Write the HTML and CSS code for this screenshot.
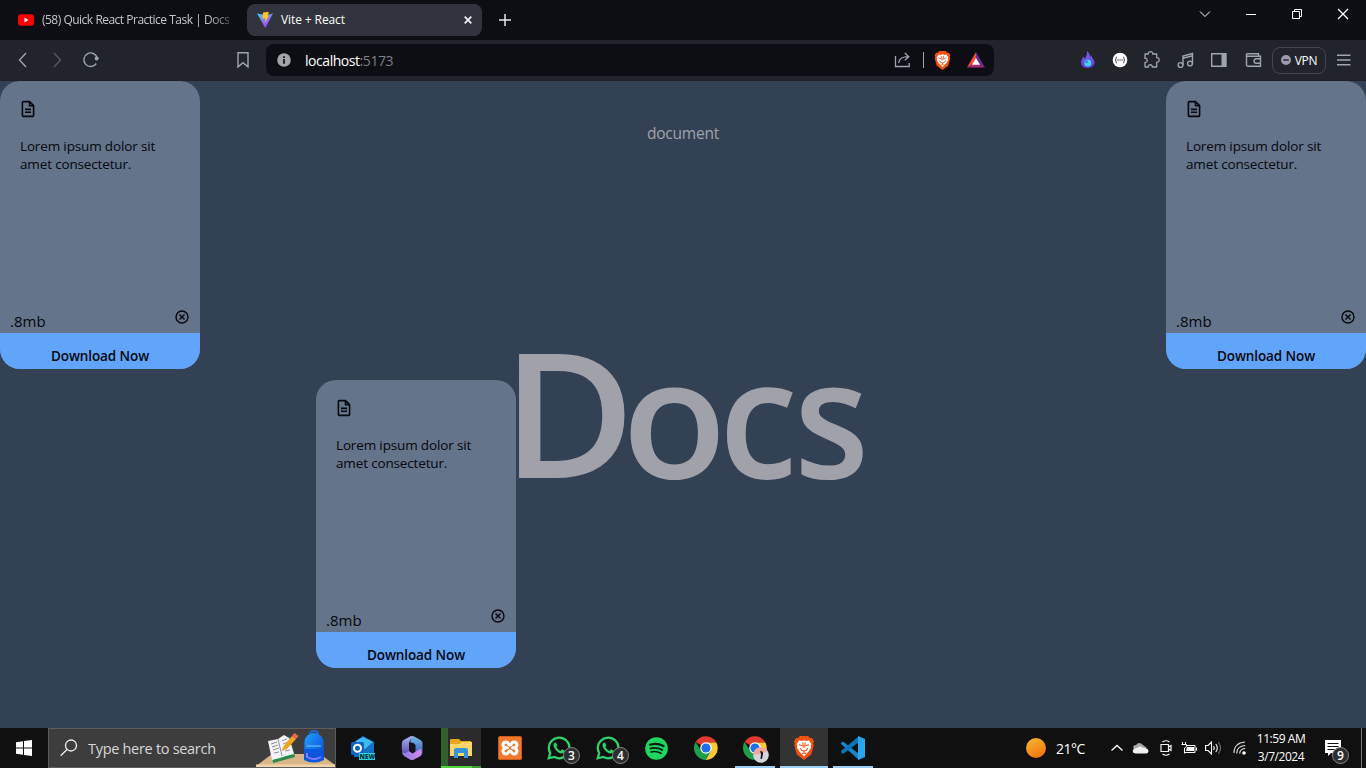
FILE: index.html
```html
<!DOCTYPE html>
<html lang="en">
<head>
<meta charset="utf-8">
<title>Vite + React</title>
<link rel="stylesheet" href="styles.css">
</head>
<body>
<svg class="defs" width="0" height="0">
  <defs>
    <linearGradient id="vite" x1="0" y1="0" x2=".6" y2="1"><stop offset="0" stop-color="#41c8ff"/><stop offset="1" stop-color="#b339f0"/></linearGradient>
    <linearGradient id="sun" x1=".2" y1="0" x2=".7" y2="1"><stop offset="0" stop-color="#f5b62e"/><stop offset="1" stop-color="#f2710f"/></linearGradient>
    <linearGradient id="m365a" x1="0" y1="0" x2="0" y2="1"><stop offset="0" stop-color="#a9b4f2"/><stop offset="1" stop-color="#5a4fb8"/></linearGradient>
    <linearGradient id="m365b" x1="0" y1="0" x2="1" y2="0"><stop offset="0" stop-color="#8d7be6"/><stop offset="1" stop-color="#d58be8"/></linearGradient>
    <linearGradient id="m365c" x1="0" y1="0" x2="0" y2="1"><stop offset="0" stop-color="#6fb9e8"/><stop offset="1" stop-color="#3f49a8"/></linearGradient>
    <linearGradient id="bag" x1="0" y1="0" x2="1" y2="1"><stop offset="0" stop-color="#22a0ff"/><stop offset="1" stop-color="#0548cf"/></linearGradient>
    <linearGradient id="fire" x1="0" y1="0" x2="0" y2="1"><stop offset="0" stop-color="#8a5cf0"/><stop offset="1" stop-color="#5a3ce0"/></linearGradient>
    <symbol id="brave" viewBox="0 0 20 24">
      <path fill="#f4500f" d="M6 0h8l2.300 2.300 1.700-.2 2 3.200-.8 2 .6 2-2.600 9.200L10 24l-7.200-5.500L.2 9.300l.6-2-.8-2 2-3.200 1.700.2z"/>
      <path fill="#fff" d="M5 4.300 7.500 5l2.500-.8 2.500.8 2.500-.7 2.300 3.800-.7 1.600.6 1.600-2.700 4.400-1.500 1.500L10 20.500l-3-3.300-1.500-1.500-2.700-4.400.6-1.600-.7-1.600z"/>
      <path fill="none" stroke="#f4500f" stroke-width="1.100" d="m5 8.700 3.300 1M15 8.700l-3.300 1M6.200 12l1.500 2.300L10 15.200l2.300-.9 1.500-2.300M10 15v1.800M8 18l2-1.200 2 1.200M8.800 6.500l.5 5M11.200 6.500l-.5 5"/>
    </symbol>
    <symbol id="chrome" viewBox="0 0 24 24">
      <path fill="#e33b2e" d="M12 12 1.600 6A12 12 0 0 1 22.400 6.500H12z"/>
      <path fill="#fcc934" d="M22.400 6.500A12 12 0 0 1 11.500 24L17 14.500 12 6.500z"/>
      <path fill="#1e9e4a" d="M1.600 6A12 12 0 0 0 11.500 24L17 14.700 12 12l-5 2.600z"/>
      <circle cx="12" cy="12" r="5.800" fill="#fff"/><circle cx="12" cy="12" r="4.600" fill="#1f6fe8"/>
    </symbol>
    <symbol id="whatsapp" viewBox="0 0 24 24">
      <path fill="none" stroke="#2bd46b" stroke-width="2.300" d="M1.700 22.300 3.200 17A10.300 10.300 0 1 1 7.300 21z"/>
      <path fill="#2bd46b" d="M8.900 6.600 7.800 6.700C6.600 7.800 6 9 7 11.200c1.600 3.200 4 5.400 7.200 6.300 1.700.3 3.500-.8 3.600-2.700L15 13.300l-1.500 1.600c-2-.8-3.300-2-4.200-3.900l1-1.400z"/>
    </symbol>
    <symbol id="file" viewBox="0 0 14 18">
      <path fill="none" stroke="#05070c" stroke-width="1.600" stroke-linejoin="round" d="M8.500 1.600H2.300a.9.900 0 0 0-.9.900v13a.9.900 0 0 0 .9.900h9.400a.9.900 0 0 0 .9-.9V5.600zM8.500 1.600v4.100h4.100M4 9.400h6M4 12.300h6"/>
    </symbol>
    <symbol id="remove" viewBox="0 0 14 14">
      <g fill="none" stroke="#05070c" stroke-width="1.400"><circle cx="7" cy="7" r="6"/><path d="m4.500 4.500 5 5m0-5-5 5"/></g>
    </symbol>
  </defs>
</svg>

<header class="tabs">
  <div class="tab">
    <svg width="16" height="16" viewBox="0 0 16 16"><rect y="2.200" width="16" height="11.500" rx="3" fill="#f00"/><path fill="#fff" d="m6.500 5.500 4 2.500-4 2.500z"/></svg>
    <span class="tab-title tab-title-faded">(58) Quick React Practice Task | Docs</span>
  </div>
  <div class="tab tab-active">
    <svg width="16" height="16" viewBox="0 0 16 16"><path fill="url(#vite)" d="M0 1.500 8.300 16 16 1.500 8.500 3z"/><path fill="#ffc51d" d="m6 .6 6-.8-1.500 3.700 1.500.1-4 7.200.3-4.200H5.300z"/></svg>
    <span class="tab-title">Vite + React</span>
    <svg class="tab-close" width="8" height="8" viewBox="0 0 8 8"><path stroke="#f1f2f5" stroke-width="1.700" d="m.7.7 6.600 6.600m0-6.600L.7 7.300"/></svg>
  </div>
  <svg class="new-tab" width="12" height="12" viewBox="0 0 12 12"><path stroke="#e8e9ee" stroke-width="1.500" d="M6 0v12M0 6h12"/></svg>
  <div class="window-controls">
    <svg width="46" height="28" viewBox="0 0 46 28"><path d="m18 11.500 5 5 5-5"/></svg>
    <svg width="46" height="28" viewBox="0 0 46 28"><path d="M18 14.500h10"/></svg>
    <svg width="46" height="28" viewBox="0 0 46 28"><path d="M18.500 11.500h7v7h-7zM20.500 11.500v-2h7v7h-2"/></svg>
    <svg width="46" height="28" viewBox="0 0 46 28"><path stroke-width="1.300" d="m18 9 10 10m0-10L18 19"/></svg>
  </div>
</header>

<nav class="toolbar">
  <div class="history">
    <svg width="34" height="24" viewBox="0 0 34 24"><path d="m20 5-6.500 7 6.500 7"/></svg>
    <svg class="dim" width="34" height="24" viewBox="0 0 34 24"><path d="m14 5 6.500 7-6.500 7"/></svg>
    <svg width="34" height="24" viewBox="0 0 34 24"><path d="M22.300 15.500A6.800 6.800 0 1 1 23.200 10"/><circle cx="22.700" cy="10.500" r="2" fill="#a0a4ae" stroke="none"/></svg>
  </div>
  <svg class="bookmark" width="34" height="24" viewBox="0 0 34 24"><path d="M12 4.700h10v14.200l-5-4.200-5 4.200z"/></svg>
  <div class="address">
    <svg width="14" height="14" viewBox="0 0 14 14"><circle cx="7" cy="7" r="6.800" fill="#a3a4a8"/><path stroke="#0d0e13" stroke-width="1.700" d="M7 6v4.700M7 3.200V5"/></svg>
    <span class="url">localhost<span class="port">:5173</span></span>
    <svg class="share" width="17" height="16" viewBox="0 0 17 16"><path fill="none" stroke="#a0a4ae" stroke-width="1.300" d="M1.500 4v10.500h13.700V11M4.700 11c.5-4.500 3-6.300 9.500-6.300M10.800 1l4 3.700-4 3.600"/></svg>
    <span class="divider"></span>
    <svg class="shield" width="17" height="19"><use href="#brave"/></svg>
    <svg width="18" height="16" viewBox="0 0 18 16"><path fill="#ff4a2d" d="M9 0 0 15.500 9 10z"/><path fill="#652d91" d="m9 0 9 15.500L9 10z"/><path fill="#a52a78" d="M0 15.500h18L9 10z"/><path fill="#fff" d="m9 6 4 6.700H5z"/></svg>
  </div>
  <div class="extensions">
    <svg width="33" height="24" viewBox="-2 0 33 24"><path fill="url(#fire)" stroke="none" d="M16 3c3 3 3 5 3 6l1.500-2c-.3 3 3 4.500 3 7.500 0 3.500-3 5.500-7 5.500s-6.500-2-6.500-5.500c0-3 2-3.500 2-6l2 2C15 9 16.700 6 16 3z"/><circle cx="16.800" cy="15" r="3.500" fill="#3fd6ee" stroke="none"/><path fill="#3d8be8" stroke="none" d="M14 12.500h3v2.500h-3z"/></svg>
    <svg width="33" height="24" viewBox="-2 0 33 24"><circle cx="16" cy="12" r="7.300" fill="#fff" stroke="none"/><path stroke="#444" stroke-width="1" d="M13 9q-1.200 0-1 1.500t-1 1.500q1.200 0 1 1.500t1 1.500M19 9q1.200 0 1 1.500t1 1.500q-1.200 0-1 1.500t-1 1.500"/><path stroke="#444" stroke-dasharray="1 1" d="M13.500 12h5"/></svg>
    <svg width="33" height="24" viewBox="-.5 0 33 24"><path stroke-width="1.300" stroke-linejoin="round" d="M9.500 6h3.300c-.6-3.200 5-3.200 4.400 0h4v3.700c3.300-.6 3.300 5 0 4.400V19h-4.500c.4-3-4.200-3-3.800 0H9.500v-4.600c3 .4 3-4.500 0-4.100z"/></svg>
    <svg width="33" height="24" viewBox="-1 0 33 24"><path d="M14 17V8l9.500-2.500V15M14 10.300l9.500-2.500"/><circle cx="11.500" cy="17" r="2.400"/><circle cx="21" cy="15.500" r="2.400"/></svg>
    <svg width="35" height="24" viewBox="0 0 35 24"><path d="M10.700 5.700h14v12.600h-14z"/><path fill="#a0a4ae" stroke="none" d="M20.500 5h5v14h-5z"/></svg>
    <svg width="34" height="24" viewBox="0 0 34 24"><path d="M10.500 5.700h12v2.600m-12-2.600v11q0 1.600 1.600 1.600h12.400v-10H12q-1.500 0-1.500-1.400M24.500 10.700h-4.200q-2.300 0-2.300 2.300t2.300 2.300h4.200"/></svg>
  </div>
  <div class="vpn"><svg width="10" height="10" viewBox="0 0 10 10"><circle cx="5" cy="5" r="5" fill="#9a9bb0"/><path stroke="#25272f" stroke-width="1.500" d="M2.300 5h5.400"/></svg><span>VPN</span></div>
  <svg class="menu" width="14" height="12" viewBox="0 0 14 12"><path d="M0 1.200h13.500M0 6h13.500M0 10.800h13.500"/></svg>
</nav>

<main class="page">
  <p class="caption">document</p>
  <h1 class="headline"><span class="l-d">D</span><span class="l-o">o</span><span class="l-c">c</span><span class="l-s">s</span></h1>
  <article class="card card-left">
    <svg class="card-file" width="14" height="18"><use href="#file"/></svg>
    <p class="card-text">Lorem ipsum dolor sit<br>amet consectetur.</p>
    <div class="card-meta"><span>.8mb</span><svg width="14" height="14"><use href="#remove"/></svg></div>
    <div class="card-download"><span>Download Now</span></div>
  </article>
  <article class="card card-dragged">
    <svg class="card-file" width="14" height="18"><use href="#file"/></svg>
    <p class="card-text">Lorem ipsum dolor sit<br>amet consectetur.</p>
    <div class="card-meta"><span>.8mb</span><svg width="14" height="14"><use href="#remove"/></svg></div>
    <div class="card-download"><span>Download Now</span></div>
  </article>
  <article class="card card-right">
    <svg class="card-file" width="14" height="18"><use href="#file"/></svg>
    <p class="card-text">Lorem ipsum dolor sit<br>amet consectetur.</p>
    <div class="card-meta"><span>.8mb</span><svg width="14" height="14"><use href="#remove"/></svg></div>
    <div class="card-download"><span>Download Now</span></div>
  </article>
</main>

<footer class="taskbar">
  <div class="start"><svg width="16" height="16" viewBox="0 0 16 16"><path fill="#fff" d="M0 2.300 7 1.300v6.300H0zM8 1.100 16 0v7.600H8zM0 8.500h7v6.300l-7-1zM8 8.500h8V16l-8-1.100z"/></svg></div>
  <div class="search">
    <svg width="18" height="18" viewBox="0 0 18 18"><g fill="none" stroke="#eee" stroke-width="1.300"><circle cx="11" cy="6.500" r="5.500"/><path d="M7 10.500.7 16.700"/></g></svg>
    <span>Type here to search</span>
    <svg class="search-art" width="79" height="38" viewBox="0 0 79 38">
      <path fill="#d9b588" d="M0 37 16 25h48l15 11v2H0z"/><path fill="#f0d3a8" d="M0 35.500h79V38H0z"/>
      <path fill="#2a8a4c" d="m14 14 20-6 5 20-22 6z"/><path fill="#f4f4f8" d="m12 12 10-2 6-4 5 3 5 16-8 2-6 2-8 2z"/><path fill="none" stroke="#8c93a8" d="m22 10 4 17M15 15l6-2m-5 5 6-2m-5 5 6-2m-5 5 5-1M26 12l5-2m-4 5 5-2m-4 6 5-2m-4 5 5-1"/>
      <path fill="#f5a31f" d="m27 18 9-11 4 3-9 10-5 2z"/><path fill="#f06a4f" d="m36 7 2.500-3 4 3-2.500 3z"/>
      <path fill="none" stroke="#1768d8" stroke-width="2" d="M54 5q0-3 4-3t4 3"/><rect x="48.500" y="4" width="19" height="29" rx="9" fill="url(#bag)"/><path fill="#0a56dc" d="M48 20h20v11q-10 5-20 0z"/><path fill="none" stroke="#8e7cff" stroke-width="2" d="M51 24v4q7 4 14 0"/><path stroke="#7dc8ff" d="M51 17h14"/>
    </svg>
  </div>
  <div class="apps">
    <div class="app"><svg width="26" height="24" viewBox="0 0 26 24"><path fill="#1570c7" d="m4 6 9-6 11 6v15H4z"/><path fill="#40b8f0" d="m6 5 7-4 10 5-8 7-9-2z"/><rect x="1" y="6" width="13" height="13" rx="1.500" fill="#0f64bd"/><circle cx="7.500" cy="12.300" r="3.500" fill="none" stroke="#fff" stroke-width="2"/><path fill="#29d3e3" d="M9 17h16v7H9z"/><text x="9.600" y="23" class="new-badge">NEW</text></svg></div>
    <div class="app"><svg width="22" height="24" viewBox="0 0 22 24"><path fill="url(#m365c)" d="M11 1q2-1 4 .4l4.500 2.500Q21.500 5 21.500 7.500v9q0 2.500-2 3.500l-3.500 2-2-8V8.500L9 6z"/><path fill="url(#m365a)" d="M13 .6Q8 4 8 8v7.500Q7 18 4.500 18 1 17.500.8 14V7.500Q.8 5 3 3.800L9 .6q2-1 4 0z"/><path fill="url(#m365b)" d="M1 15.500q3 3.500 7-.5l3.500 2.500 8-4.800q3 4-.5 7.500l-6 3.200q-2 1-4 0l-6-3.300Q1 18.500 1 15.500z"/><path fill="#15131f" d="m8 8.500 3.500-2L14.500 9v5.500l-3 2-3.500-2z"/></svg></div>
    <div class="app app-explorer"><svg width="22" height="19" viewBox="0 0 22 19"><path fill="#e9a51e" d="M0 1q0-1 1-1h8l2 2h10v5H0z"/><path fill="#ffd667" d="M0 5h10l1.500-2H22v14H0z"/><path fill="#3993dc" d="M4 11q0-2 2-2h10q2 0 2 2v8h-4v-5H8v5H4z"/></svg></div>
    <div class="app"><svg width="24" height="24" viewBox="0 0 24 24"><rect width="24" height="24" rx="2.500" fill="#f0792d"/><rect x=".5" y=".5" width="23" height="23" rx="2" fill="none" stroke="#c75b19"/><path fill="none" stroke="#fff" stroke-width="3" stroke-linejoin="round" stroke-linecap="round" d="M9.500 11.800H8Q5 11 5 8.700T7.800 6Q10 6 10.500 8q1.500 2 3 0 .5-2 2.700-2T19 8.700q0 2.300-3 3.100h-1.500M8 11.800q-3 .8-3 3.300T7.800 18q2.200 0 2.700-2 1.500-2 3 0 .5 2 2.700 2t2.800-2.900q0-2.500-3-3.300"/></svg></div>
    <div class="app"><svg width="24" height="24"><use href="#whatsapp"/></svg><span class="count">3</span></div>
    <div class="app"><svg width="24" height="24"><use href="#whatsapp"/></svg><span class="count">4</span></div>
    <div class="app"><svg width="23" height="23" viewBox="0 0 23 23"><circle cx="11.500" cy="11.500" r="11.300" fill="#1fd760"/><g fill="none" stroke="#0b1a10" stroke-linecap="round"><path stroke-width="2.200" d="M5 7.700q7-2 13.500 1.300"/><path stroke-width="1.900" d="M5.500 11.500q6-1.700 11.700 1.300"/><path stroke-width="1.600" d="M6 15q5-1.300 10 1.300"/></g></svg></div>
    <div class="app"><svg width="24" height="24"><use href="#chrome"/></svg></div>
    <div class="app app-open"><svg width="24" height="24"><use href="#chrome"/></svg><svg class="profile" width="16" height="16" viewBox="0 0 16 16"><circle cx="8" cy="8" r="7.800" fill="#d4d5dc"/><path fill="#f0a99b" d="M.5 8a7.500 7.500 0 0 1 14-4L7 7z"/><path fill="#18191d" d="M7 4q3.500 0 3 3L9 12H7.500L8 7z"/></svg></div>
    <div class="app app-focused"><svg width="20" height="24"><use href="#brave"/></svg></div>
    <div class="app app-open"><svg width="24" height="24" viewBox="0 0 24 24"><path fill="#1684d0" d="m0 7 2-1.500L18 18v6L0 8z"/><path fill="#0875bd" d="m0 16 2 2L18 6V0L0 15z"/><path fill="#2ba6f0" d="m17 0 7 3v18l-7 3z"/></svg></div>
  </div>
  <div class="tray">
    <svg class="sun" width="20" height="20" viewBox="0 0 20 20"><circle cx="10" cy="10" r="10" fill="url(#sun)"/></svg>
    <span class="temp">21°C</span>
    <svg class="chevron" width="12" height="8" viewBox="0 0 12 8"><path fill="none" stroke="#fff" stroke-width="1.300" d="m.5 6.500 5.500-5 5.500 5"/></svg>
    <svg class="cloud" width="17" height="11" viewBox="0 0 17 11"><path fill="#a9a9a9" d="M2 7Q0 2 4 2q3-4 7 0l4 3z"/><path fill="#f2f2f2" d="M3.500 10.500Q0 10 1 7q1-2 4-2 3-3 6 0 5-.5 5.500 3 0 2-2 2.500z"/></svg>
    <svg class="meet" width="12" height="16" viewBox="0 0 12 16"><path fill="none" stroke="#f2f2f2" stroke-width="1.200" d="M2.500 2Q6-.5 9.500 2M2.500 14q3.500 2.500 7 0M1 4.500h7.500v7H1zM8.500 7 11 5.500v5L8.500 9"/></svg>
    <svg class="battery" width="16" height="12" viewBox="0 0 16 12"><path fill="none" stroke="#fff" stroke-width="1" d="M1.500 0v2.500M4.500 0v2.500M.5 2.500h5v2L3.500 6v5.500M5.500 3.500h8.500v7H3.500M15.500 5.500v3"/><path fill="#fff" d="M6 5h7v4H5z"/></svg>
    <svg class="volume" width="17" height="14" viewBox="0 0 17 14"><path fill="none" stroke="#fff" stroke-width="1.100" d="M.6 4.500h2.500L6.500 1v12L3.100 9.500H.6zM8.500 5q1.500 2 0 4M10.800 3q3 4 0 8"/><path fill="none" stroke="#777" d="M13.300 1q4.500 6 0 12"/></svg>
    <svg class="wifi" width="14" height="14" viewBox="0 0 14 14"><g fill="none" stroke="#ddd" stroke-width="1.100"><path d="M1 12Q1 2 12 1M3.700 12.500q0-7.500 8.500-8M6.700 12.500q0-4.500 5.500-5"/></g><circle cx="11" cy="12" r="1.800" fill="#fff"/></svg>
    <div class="clock"><span class="time">11:59 AM</span><span class="date">3/7/2024</span></div>
    <div class="notice"><svg width="16" height="16" viewBox="0 0 16 16"><path fill="#fff" d="M0 0h16v13H6l-3 3v-3H0z"/><path stroke="#101010" stroke-width="1.200" d="M2.500 3.500h11M2.500 6.500h11M2.500 9.500h7"/></svg><span class="count">9</span></div>
    <span class="show-desktop"></span>
  </div>
</footer>
</body>
</html>
```
FILE: styles.css
```css
* { box-sizing: border-box; }
body {
  margin: 0;
  height: 768px;
  display: flex;
  flex-direction: column;
  overflow: hidden;
  background: #334155;
  color: #fff;
  font-family: "Open Sans", "Noto Sans", sans-serif;
  font-size: 12px;
}
svg { display: block; flex: none; }
p, h1 { margin: 0; }
span { white-space: nowrap; }
.defs { position: absolute; }

.tabs { height: 40px; flex: none; display: flex; align-items: center; background: #0d0e13; padding-left: 8px; }
.tab { width: 239px; height: 32px; padding: 0 10px; display: flex; align-items: center; gap: 8px; color: #c5c6ca; }
.tab-active { width: 235px; background: #31343d; border-radius: 8px; color: #fff; }
.tab-title { font-size: 12px; letter-spacing: -0.1px; padding-bottom: 1px; }
.tab-title-faded { letter-spacing: -0.53px; word-spacing: 0.2px; -webkit-mask-image: linear-gradient(90deg, #000 88%, #0006); mask-image: linear-gradient(90deg, #000 88%, #0006); }
.tab-close { margin-left: auto; }
.new-tab { margin-left: 17px; }
.window-controls { display: flex; margin-left: auto; align-self: flex-start; fill: none; stroke: #fff; }

.toolbar { height: 41px; flex: none; display: flex; align-items: center; background: #22242c; padding: 0 15px 0 6px; border-bottom: 1px solid #1f2129; fill: none; stroke: #a0a4ae; stroke-width: 1.4; }
.history { display: flex; }
.dim { opacity: .4; }
.bookmark { margin-left: 118px; }
.address { width: 728px; height: 32px; margin-left: 6px; padding: 0 9px 0 11px; display: flex; align-items: center; background: #0d0e13; border-radius: 8px; stroke: none; }
.url { margin-left: 14px; font-size: 14px; letter-spacing: -0.45px; }
.port { color: #7d7f86; }
.share { margin-left: auto; }
.divider { width: 1px; height: 16px; margin: 0 10px 0 12px; background: #a0a4ae; }
.shield { margin-right: 16px; }
.extensions { display: flex; margin-left: auto; }
.vpn { width: 54px; height: 27px; margin-left: 2px; border: 1px solid #43464f; border-radius: 8px; display: flex; align-items: center; justify-content: center; gap: 4px; font-size: 12px; letter-spacing: -0.3px; stroke: none; }
.menu { margin-left: 11px; }

.page { flex: 1; position: relative; display: flex; flex-direction: column; align-items: center; background: #334155; }
.caption { margin-top: 40px; font-size: 15.5px; letter-spacing: -0.2px; line-height: 24px; color: #a1a1aa; }
.headline { position: absolute; left: 502px; top: 211px; display: flex; align-items: baseline; font-size: 174px; font-weight: 600; line-height: 237px; color: #a1a1aa; }
.headline span { transform-origin: left; }
.l-d { width: 120px; transform: scaleX(1.045); }
.l-o, .l-c, .l-s { font-size: 165px; }
.l-o { width: 97px; transform: scaleX(1.04); }
.l-c { width: 75px; transform: scaleX(.96); }
.l-s { transform: scaleX(.935); }
.card { position: absolute; width: 200px; height: 288px; border-radius: 20px; overflow: hidden; display: flex; flex-direction: column; background: #64748b; color: #05070c; }
.card-left { left: 0; top: 0; }
.card-right { right: 0; top: 0; }
.card-dragged { left: 316px; top: 299px; }
.card-file { margin: 19px 0 0 21px; }
.card-text { margin: 19px 0 0 20px; font-size: 13.5px; line-height: 18px; letter-spacing: -0.15px; }
.card-meta { margin-top: auto; height: 22px; padding: 0 11px 0 10px; display: flex; justify-content: space-between; font-size: 15px; line-height: 20px; }
.card-meta svg { margin-top: -1px; }
.card-download { height: 36px; padding-top: 10px; background: #60a5fa; text-align: center; font-size: 13.5px; line-height: 26px; font-weight: 600; letter-spacing: -0.1px; }

.taskbar { height: 40px; flex: none; display: flex; background: #101010; }
.start { width: 48px; display: flex; align-items: center; justify-content: center; }
.search { width: 288px; border: 1px solid #5c5c5c; background: #3d3d3d; display: flex; align-items: center; padding-left: 11px; color: #d8d8d8; font-size: 14.5px; letter-spacing: -0.3px; }
.search span { margin-left: 10px; }
.search-art { margin-left: auto; }
.apps { display: flex; padding-left: 2px; }
.app { width: 49px; height: 40px; position: relative; display: flex; align-items: center; justify-content: center; }
.new-badge { font-size: 6.5px; font-weight: 800; fill: #06343c; }
.app-explorer {
  background:
    linear-gradient(90deg, #4fd63c 0 31px, #3c9a33 31px) 5px 38px / 40px 2px no-repeat,
    linear-gradient(90deg, #34602d 0 7px, #2b2b2b 7px) 5px 0 / 40px 38px no-repeat;
}
.app-open { background: linear-gradient(#9bd0fa, #9bd0fa) 5px 38px / 40px 2px no-repeat; }
.app-focused { background: linear-gradient(#9bd0fa, #9bd0fa) 1px 38px / 48px 2px no-repeat, linear-gradient(#333, #333) 1px 0 / 48px 40px no-repeat; }
.count { position: absolute; left: 29px; top: 19px; width: 17px; height: 17px; border: 1px solid #858585; border-radius: 50%; background: #2e2e2e; font-size: 12px; line-height: 15px; font-weight: 600; text-align: center; }
.profile { position: absolute; left: 23px; top: 19px; }
.tray { margin-left: auto; display: flex; align-items: center; }
.temp { width: 54px; margin-left: 10px; font-size: 14px; letter-spacing: -0.5px; }
.chevron { margin-left: 1px; }
.cloud { margin-left: 9px; }
.meet { margin-left: 11px; }
.battery { margin-left: 9px; }
.volume { margin-left: 8px; }
.wifi { margin-left: 11px; }
.clock { width: 60px; margin-left: 4px; display: flex; flex-direction: column; align-items: center; line-height: 18px; letter-spacing: -0.45px; }
.notice { position: relative; width: 36px; margin-left: 14px; }
.notice .count { left: 7px; top: 7px; }
.show-desktop { width: 5px; height: 40px; border-left: 1px solid #777; }
```
